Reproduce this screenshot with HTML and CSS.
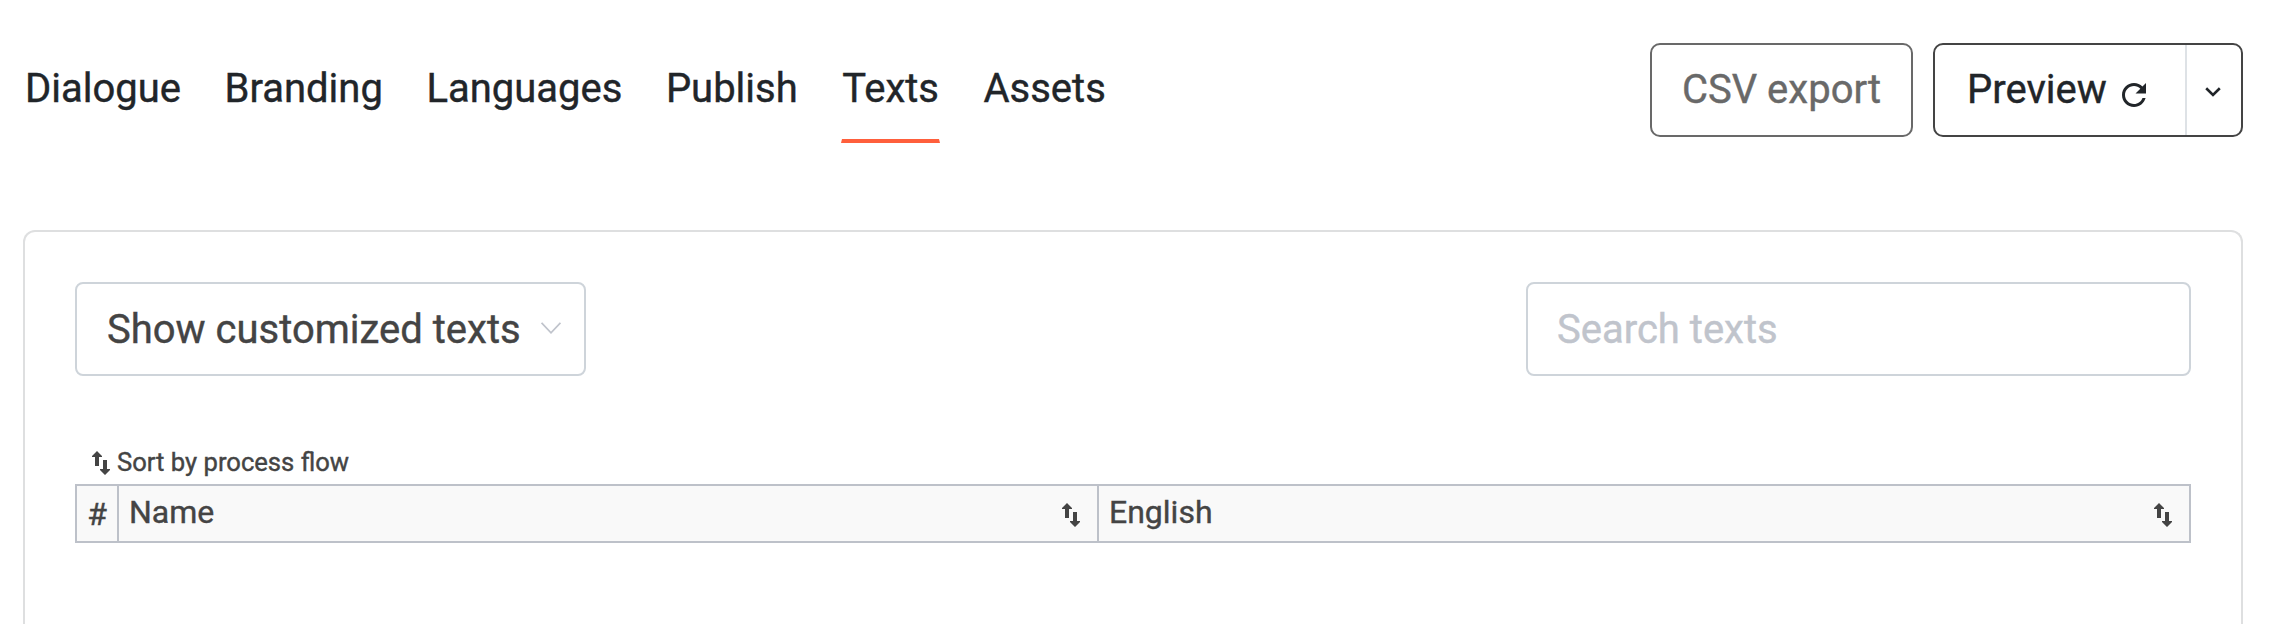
FILE: index.html
```html
<!DOCTYPE html>
<html lang="en">
<head>
<meta charset="UTF-8" />
<meta name="viewport" content="width=device-width, initial-scale=1" />
<title>Texts</title>
<link rel="stylesheet" href="styles.css">
</head>
<body>

<!-- Top bar -->
<header class="topbar">
  <nav class="tabs">
    <a class="tab">Dialogue</a>
    <a class="tab">Branding</a>
    <a class="tab">Languages</a>
    <a class="tab">Publish</a>
    <a class="tab active">Texts</a>
    <a class="tab">Assets</a>
  </nav>
  <div class="actions">
    <button class="btn btn-export">CSV export</button>
    <div class="btn-group">
      <button class="btn-preview">Preview
        <svg class="icon-reload" viewBox="4 4 16 16"><path d="M17.65 6.35C16.2 4.9 14.21 4 12 4c-4.42 0-7.99 3.58-7.99 8s3.57 8 7.99 8c3.73 0 6.84-2.55 7.73-6h-2.08c-.82 2.33-3.04 4-5.65 4-3.31 0-6-2.69-6-6s2.69-6 6-6c1.66 0 3.14.69 4.22 1.78L13 11h7V4l-2.35 2.35z" fill="currentColor"/></svg>
      </button>
      <button class="btn-more">
        <svg class="icon-chevron" viewBox="0 0 16 10"><path d="M1.2 1.3L8 8L14.8 1.3" fill="none" stroke="currentColor" stroke-width="2.6"/></svg>
      </button>
    </div>
  </div>
</header>

<!-- Texts panel -->
<main class="panel">
  <div class="filters">
    <div class="select">
      <span>Show customized texts</span>
      <svg class="icon-select" viewBox="0 0 20 12"><path d="M0.6 0.8L10 10.8L19.4 0.8" fill="none" stroke="currentColor" stroke-width="1.7"/></svg>
    </div>
    <input class="search" type="text" placeholder="Search texts" />
  </div>

  <div class="sort">
    <svg class="icon-sort" viewBox="0 0 18 24"><path d="M5 0L10 5V6H7V15H3V6H0V5ZM13 24L8 19V18H11V9H15V18H18V19Z" fill="currentColor"/></svg>
    <span>Sort by process flow</span>
  </div>

  <div class="table-head">
    <div class="cell cell-num">#</div>
    <div class="cell">
      <span class="label">Name</span>
      <svg class="icon-sort" viewBox="0 0 18 24"><path d="M5 0L10 5V6H7V15H3V6H0V5ZM13 24L8 19V18H11V9H15V18H18V19Z" fill="currentColor"/></svg>
    </div>
    <div class="cell">
      <span class="label">English</span>
      <svg class="icon-sort" viewBox="0 0 18 24"><path d="M5 0L10 5V6H7V15H3V6H0V5ZM13 24L8 19V18H11V9H15V18H18V19Z" fill="currentColor"/></svg>
    </div>
  </div>
</main>

</body>
</html>
```
FILE: styles.css
```css
* {
  box-sizing: border-box;
}
body {
  margin: 0;
  height: 624px;
  overflow: hidden;
  background: #fff;
  color: #212529;
  font-family: Roboto, sans-serif;
  font-size: 40px;
  -webkit-text-stroke: 0.4px currentColor;
  display: flex;
  flex-direction: column;
}
button, input {
  font: inherit;
  color: inherit;
  background: none;
  border: none;
  margin: 0;
  padding: 0;
}
svg {
  display: block;
  flex: none;
}

/* Top bar */
.topbar {
  display: flex;
  justify-content: space-between;
  align-items: flex-start;
  height: 230px;
  padding: 43px 51px 0 25px;
}
.tabs {
  display: flex;
  gap: 43.5px;
}
.tab {
  height: 100px;
  line-height: 92px;
  border-bottom: 4px solid transparent;
}
.tab.active {
  border-color: #ff5f3c;
  border-left: 1px solid transparent;
  border-right: 1px solid transparent;
}
.actions {
  display: flex;
  gap: 20px;
}
.btn {
  height: 94px;
  border: 2px solid #696969;
  border-radius: 10px;
}
.btn-export {
  width: 263px;
  color: #696969;
  padding-bottom: 2px;
}
.btn-group {
  display: flex;
  width: 310px;
  height: 94px;
  border: 2px solid #444;
  border-radius: 10px;
}
.btn-preview {
  flex: 1;
  display: flex;
  align-items: center;
  gap: 15px;
  padding: 0 0 2px 32px;
}
.icon-reload {
  width: 24px;
  height: 24px;
  margin-top: 12px;
}
.btn-more {
  display: flex;
  align-items: center;
  justify-content: center;
  width: 56px;
  padding-right: 2px;
  border-left: 2px solid #dee2e6;
}
.icon-chevron {
  width: 16px;
  height: 10px;
  margin-top: 4px;
}

/* Panel */
.panel {
  flex: 1;
  margin: 0 51px 0 23px;
  padding: 50px 50px 0;
  border: 2px solid #dedfe0;
  border-bottom: none;
  border-radius: 12px 12px 0 0;
  color: #444;
}
.filters {
  display: flex;
  justify-content: space-between;
}
.select, .search {
  height: 94px;
  border: 2px solid #ced4da;
  border-radius: 8px;
}
.select {
  display: flex;
  align-items: center;
  justify-content: space-between;
  width: 511px;
  padding: 0 23px 0 30px;
}
.icon-select {
  width: 20px;
  height: 12px;
  margin-top: -2px;
  color: #c0c4cc;
}
.search {
  width: 665px;
  padding: 0 29px;
}
.search::placeholder {
  color: #c0c4cc;
  opacity: 1;
}
.sort {
  display: flex;
  align-items: center;
  gap: 7px;
  height: 44px;
  margin-top: 64px;
  padding-left: 17px;
  font-size: 25.6px;
}
.icon-sort {
  width: 18px;
  height: 24px;
  margin-top: 2px;
}

/* Table header */
.table-head {
  display: grid;
  grid-template-columns: 42px 980px 1fr;
  height: 59px;
  border: 2px solid #bdc1c9;
  background: #f9f9f9;
  font-size: 32px;
}
.cell {
  display: flex;
  align-items: center;
  justify-content: space-between;
  padding: 0 17px 0 10px;
  border-right: 2px solid #bdc1c9;
}
.cell:last-child {
  border-right: none;
}
.cell-num {
  justify-content: center;
  padding: 0;
}
.label {
  padding-bottom: 3px;
}
```
